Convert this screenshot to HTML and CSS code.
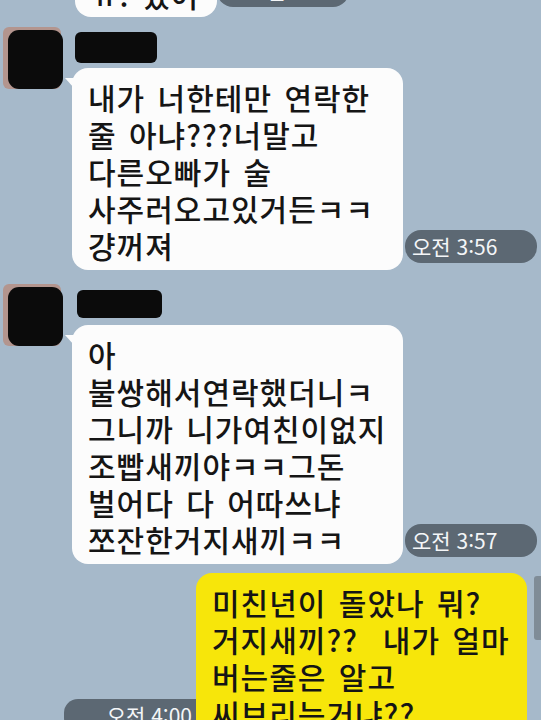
FILE: index.html
```html
<!DOCTYPE html>
<html lang="ko">
<head>
<meta charset="utf-8">
<title>Chat</title>
<link rel="stylesheet" href="styles.css">
</head>
<body>
<div class="chat">
  <div class="top-row">
    <div class="bubble white small">ㅠ. 였어</div>
    <div class="time time-top">오전 3:55</div>
  </div>

  <div class="msg msg-first">
    <div class="avatar"><div class="avatar-inner"></div></div>
    <div class="body">
      <div class="name"><span class="name-blot"></span></div>
      <div class="line">
        <div class="bubble white tail">내가 너한테만 연락한<br>줄 아냐???너말고<br>다른오빠가 술<br>사주러오고있거든ㅋㅋ<br>걍꺼져</div>
        <div class="time">오전 3:56</div>
      </div>
    </div>
  </div>

  <div class="msg msg-second">
    <div class="avatar"><div class="avatar-inner"></div></div>
    <div class="body">
      <div class="name"><span class="name-blot wide"></span></div>
      <div class="line">
        <div class="bubble white tail">아<br>불쌍해서연락했더니ㅋ<br>그니까 니가여친이없지<br>조빱새끼야ㅋㅋ그돈<br>벌어다 다 어따쓰냐<br>쪼잔한거지새끼ㅋㅋ</div>
        <div class="time">오전 3:57</div>
      </div>
    </div>
  </div>

  <div class="out-row">
    <div class="time time-out">오전 4:00</div>
    <div class="bubble yellow">미친년이 돌았나 뭐?<br>거지새끼??&nbsp; 내가 얼마<br>버는줄은 알고<br>씨브리는거냐??</div>
  </div>

  <div class="scrollbar"></div>
</div>
</body>
</html>
```

FILE: styles.css
```css
html, body {
  margin: 0;
  padding: 0;
}

body {
  width: 541px;
  height: 720px;
  overflow: hidden;
  background: #a6b9ca;
  font-family: "Noto Sans CJK KR", "Noto Sans", sans-serif;
}

.chat {
  position: relative;
  display: flex;
  flex-direction: column;
  height: 720px;
  overflow: hidden;
}

.bubble {
  position: relative;
  z-index: 1;
  box-sizing: border-box;
  width: 331px;
  padding: 11px 14px 6px 16px;
  border-radius: 16px;
  font-size: 30px;
  font-weight: 500;
  line-height: 37px;
  letter-spacing: 1px;
  word-spacing: 3px;
  color: #151515;
  white-space: nowrap;
}

.white {
  background: #fcfcfc;
}

.yellow {
  background: #f7e60a;
}

.tail::before {
  content: "";
  position: absolute;
  left: -7px;
  top: 10px;
  border-bottom: 10px solid transparent;
  border-right: 9px solid #fcfcfc;
}

/* top partially visible row */
.top-row {
  display: flex;
  align-items: flex-end;
  margin-top: -35px;
  padding-left: 75px;
}

.small {
  width: 142px;
  padding-bottom: 4px;
}

.time {
  box-sizing: border-box;
  width: 132px;
  height: 33px;
  margin-left: 2px;
  margin-bottom: 7px;
  padding-left: 7px;
  border-radius: 16px;
  background: #5c6873;
  color: #f4f6f8;
  font-size: 21px;
  line-height: 33px;
  white-space: nowrap;
}

.time-top {
  margin-left: 0;
  margin-bottom: 10px;
  padding-left: 30px;
}

/* incoming messages */
.msg {
  display: flex;
  align-items: flex-start;
  padding-left: 3px;
}

.msg-first {
  margin-top: 10px;
}

.msg-second {
  margin-top: 14px;
}

.avatar {
  flex: none;
  width: 58px;
  height: 62px;
  border-radius: 6px;
  background: #b3958e;
}

.avatar-inner {
  width: 55px;
  height: 59px;
  margin: 3px 0 0 5px;
  border-radius: 11px;
  background: #0b0b0b;
}

.body {
  display: flex;
  flex-direction: column;
  margin-left: 11px;
}

.name {
  box-sizing: border-box;
  height: 41px;
  padding-top: 5px;
  padding-left: 3px;
}

.name-blot {
  display: block;
  width: 82px;
  height: 31px;
  border-radius: 6px;
  background: #0b0b0b;
}

.name-blot.wide {
  width: 85px;
  height: 28px;
  margin-left: 2px;
  margin-top: 1px;
}

.line {
  display: flex;
  align-items: flex-end;
}

/* outgoing */
.out-row {
  display: flex;
  justify-content: flex-end;
  align-items: flex-end;
  margin-top: 9px;
  padding-right: 14px;
}

.yellow {
  padding-left: 16px;
}

.time-out {
  margin-left: 0;
  margin-right: -4px;
  margin-bottom: 6px;
  padding-left: 0;
  padding-right: 8px;
  width: 136px;
  text-align: right;
  border-radius: 14px 0 0 14px;
}

.scrollbar {
  position: absolute;
  right: 0;
  top: 576px;
  width: 7px;
  height: 64px;
  background: #7f8c97;
  border-radius: 3px 0 0 3px;
}
```
